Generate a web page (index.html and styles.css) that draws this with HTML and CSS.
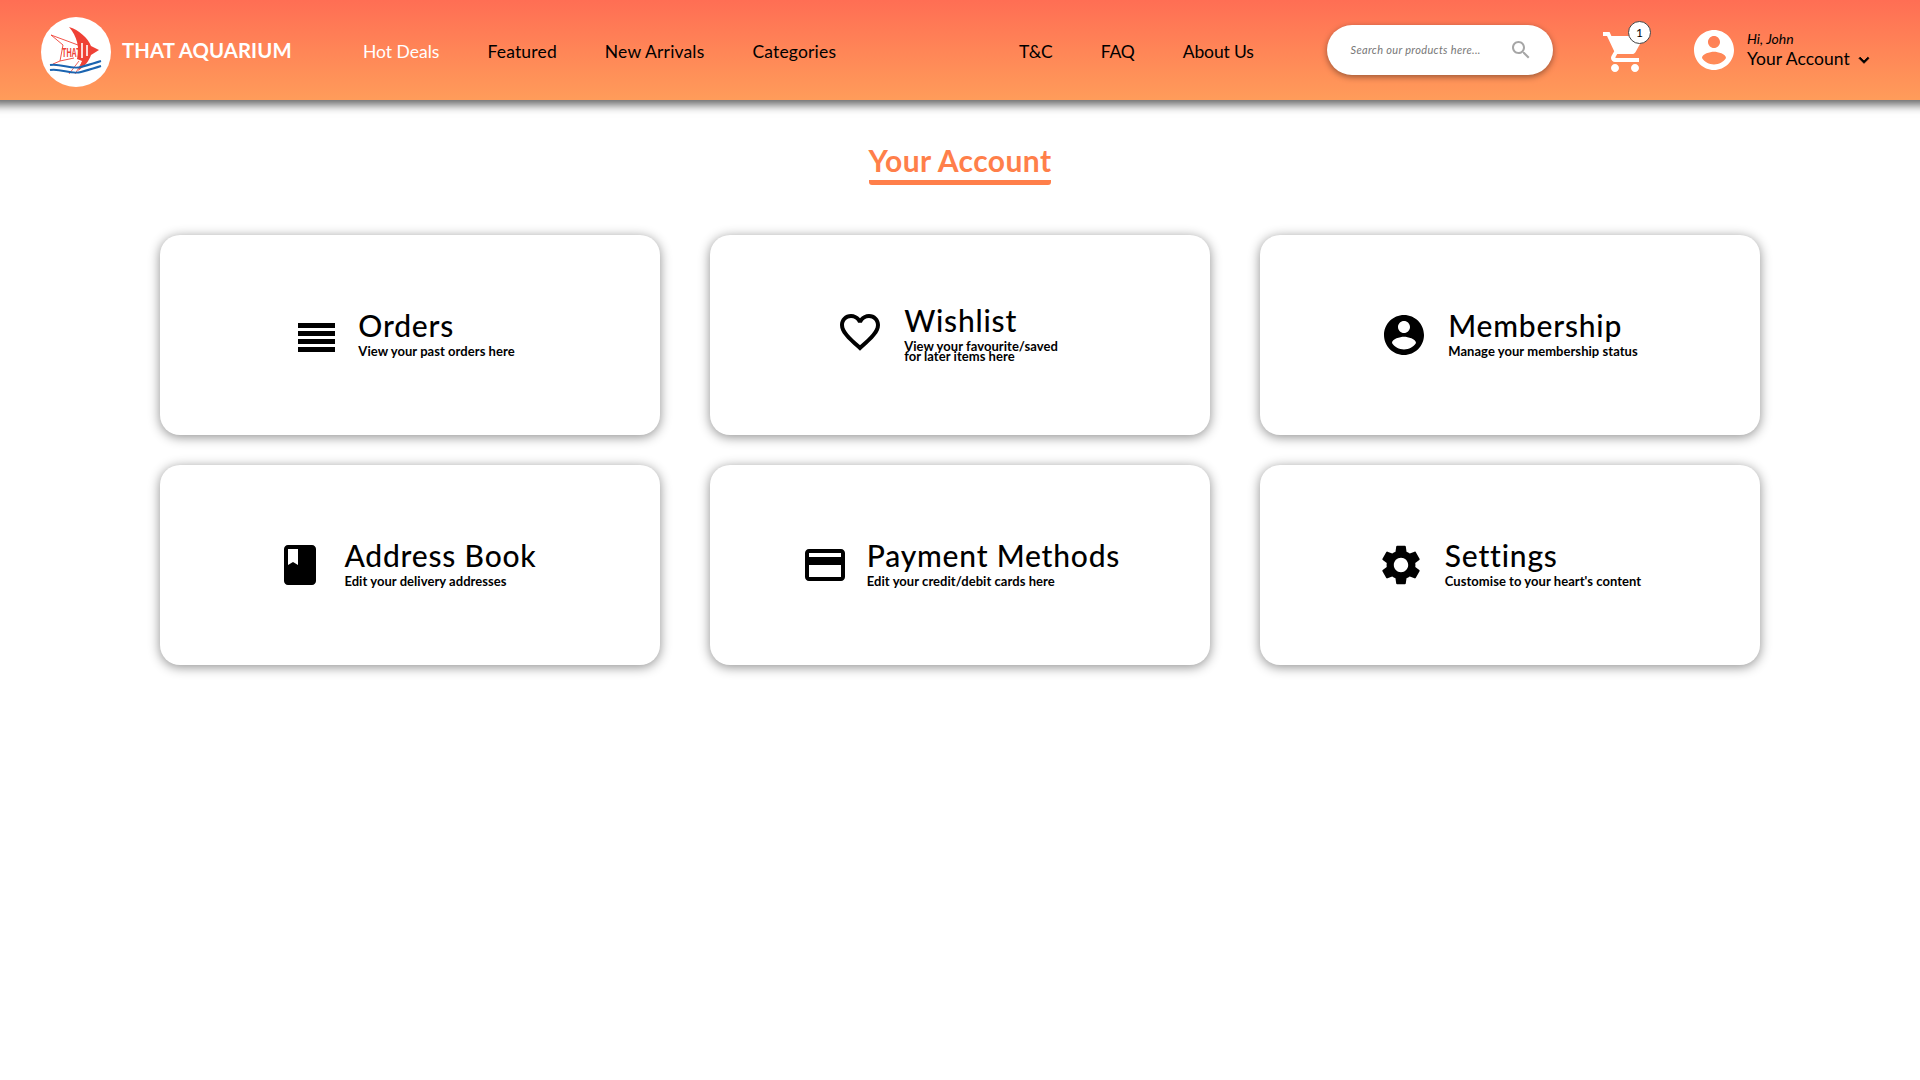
FILE: index.html
```html
<!DOCTYPE html>
<html lang="en">
<head>
<meta charset="utf-8">
<title>That Aquarium - Your Account</title>
<link rel="stylesheet" href="styles.css">
</head>
<body>
<header class="topbar">
  <a class="brand">
    <span class="brand-logo">
      <svg viewBox="0 0 70 70" width="70" height="70">
        <circle cx="35" cy="35" r="35" fill="#fff"/>
        <path d="M28 10 C38 13 47 21 50 29 L58 33 L50 38 C48 44 44 49 37 54 L41 44 L36 42 C39 31 36 19 28 10Z" fill="#ef4136"/>
        <path d="M41 26 L41 41 M46 28 L46 39" stroke="#fff" stroke-width="1.6" fill="none"/>
        <path d="M10 18 L37 28 M10 18 L22 28 L19 44 L33 41 M19 44 L12 47" fill="none" stroke="#ef4136" stroke-width=".9"/>
        <text class="logo-text" transform="translate(21 40) scale(.8 1.35)">THAT</text>
        <path d="M28 57 L38 44 M34 57 L42 44" stroke="#ef4136" stroke-width=".8" fill="none"/>
        <path d="M9 48 C20 46 30 53 40 50 C47 48 54 46 60 44 M9 53 C20 51 30 58 40 55 C47 53 54 51 60 49" fill="none" stroke="#1b64b0" stroke-width="1.9"/>
      </svg>
    </span>
    <span class="brand-name">THAT AQUARIUM</span>
  </a>
  <nav class="nav nav-main">
    <a class="nav-link is-active">Hot Deals</a>
    <a class="nav-link">Featured</a>
    <a class="nav-link">New Arrivals</a>
    <a class="nav-link">Categories</a>
  </nav>
  <nav class="nav nav-side">
    <a class="nav-link">T&amp;C</a>
    <a class="nav-link">FAQ</a>
    <a class="nav-link">About Us</a>
  </nav>
  <div class="search">
    <span class="search-text">Search our products here...</span>
    <svg class="search-icon" viewBox="0 0 24 24" width="24" height="24"><path d="M15.5 14h-.79l-.28-.27C15.41 12.59 16 11.11 16 9.5 16 5.91 13.09 3 9.5 3S3 5.91 3 9.5 5.91 16 9.5 16c1.61 0 3.09-.59 4.23-1.57l.27.28v.79l5 4.99L20.49 19l-4.99-5zm-6 0C7.01 14 5 11.99 5 9.5S7.01 5 9.5 5 14 7.01 14 9.5 11.99 14 9.5 14z"/></svg>
  </div>
  <div class="cart">
    <svg class="cart-icon" viewBox="0 0 24 24" width="48" height="48"><path d="M7 18c-1.1 0-1.99.9-1.99 2S5.9 22 7 22s2-.9 2-2-.9-2-2-2zM1 2v2h2l3.6 7.59-1.35 2.45c-.16.28-.25.61-.25.96 0 1.1.9 2 2 2h12v-2H7.42c-.14 0-.25-.11-.25-.25l.03-.12.9-1.63h7.45c.75 0 1.41-.41 1.75-1.03l3.58-6.47c.08-.14.12-.31.12-.48 0-.55-.45-1-1-1H5.21l-.94-2H1zm16 16c-1.1 0-1.99.9-1.99 2s.89 2 1.99 2 2-.9 2-2-.9-2-2-2z"/></svg>
    <span class="cart-badge">1</span>
  </div>
  <div class="account">
    <svg class="account-icon" viewBox="0 0 24 24" width="48" height="48"><path d="M12 2C6.48 2 2 6.48 2 12s4.48 10 10 10 10-4.48 10-10S17.52 2 12 2zm0 3c1.66 0 3 1.34 3 3s-1.34 3-3 3-3-1.34-3-3 1.34-3 3-3zm0 14.2c-2.5 0-4.71-1.28-6-3.22.03-1.99 4-3.08 6-3.08 1.99 0 5.97 1.09 6 3.08-1.29 1.94-3.5 3.22-6 3.22z"/></svg>
    <div class="account-text">
      <span class="account-hi">Hi, John</span>
      <span class="account-name">Your Account
        <svg class="chevron" viewBox="0 0 24 24" width="20" height="20"><path d="M16.59 8.59L12 13.17 7.41 8.59 6 10l6 6 6-6z" stroke="#000" stroke-width="1"/></svg>
      </span>
    </div>
  </div>
</header>

<main class="page">
  <div class="page-head"><h1 class="page-title">Your Account</h1></div>
  <section class="tiles">
    <a class="tile tile-left">
      <svg class="tile-icon icon-lines" viewBox="0 0 37 29" width="37" height="29"><path d="M0 0h37v5H0zM0 8h37v5H0zM0 16h37v5H0zM0 24h37v5H0z"/></svg>
      <div class="tile-text"><h2 class="tile-title">Orders</h2><p class="tile-sub">View your past orders here</p></div>
    </a>
    <a class="tile tile-up">
      <svg class="tile-icon" viewBox="0 0 24 24" width="48" height="48"><path d="M16.5 3c-1.74 0-3.41.81-4.5 2.09C10.91 3.81 9.24 3 7.5 3 4.42 3 2 5.42 2 8.5c0 3.78 3.4 6.86 8.55 11.54L12 21.35l1.45-1.32C18.6 15.36 22 12.28 22 8.5 22 5.42 19.58 3 16.5 3zm-4.4 15.55l-.1.1-.1-.1C7.14 14.24 4 11.39 4 8.5 4 6.5 5.5 5 7.5 5c1.54 0 3.04.99 3.57 2.36h1.87C13.46 5.99 14.96 5 16.5 5c2 0 3.5 1.5 3.5 3.5 0 2.89-3.14 5.74-7.9 10.05z"/></svg>
      <div class="tile-text tile-text-wide"><h2 class="tile-title">Wishlist</h2><p class="tile-sub tile-sub-wrap">View your favourite/saved<br>for later items here</p></div>
    </a>
    <a class="tile">
      <svg class="tile-icon" viewBox="0 0 24 24" width="48" height="48"><path d="M12 2C6.48 2 2 6.48 2 12s4.48 10 10 10 10-4.48 10-10S17.52 2 12 2zm0 3c1.66 0 3 1.34 3 3s-1.34 3-3 3-3-1.34-3-3 1.34-3 3-3zm0 14.2c-2.5 0-4.71-1.28-6-3.22.03-1.99 4-3.08 6-3.08 1.99 0 5.97 1.09 6 3.08-1.29 1.94-3.5 3.22-6 3.22z"/></svg>
      <div class="tile-text"><h2 class="tile-title">Membership</h2><p class="tile-sub">Manage your membership status</p></div>
    </a>
    <a class="tile tile-left">
      <svg class="tile-icon" viewBox="0 0 24 24" width="48" height="48"><path d="M18 2H6c-1.1 0-2 .9-2 2v16c0 1.1.9 2 2 2h12c1.1 0 2-.9 2-2V4c0-1.1-.9-2-2-2zM6 4h5v8l-2.5-1.5L6 12V4z"/></svg>
      <div class="tile-text"><h2 class="tile-title">Address Book</h2><p class="tile-sub">Edit your delivery addresses</p></div>
    </a>
    <a class="tile tile-tight">
      <svg class="tile-icon" viewBox="0 0 24 24" width="48" height="48"><path d="M20 4H4c-1.11 0-1.99.89-1.99 2L2 18c0 1.11.89 2 2 2h16c1.11 0 2-.89 2-2V6c0-1.11-.89-2-2-2zm0 14H4v-6h16v6zm0-10H4V6h16v2z"/></svg>
      <div class="tile-text"><h2 class="tile-title">Payment Methods</h2><p class="tile-sub">Edit your credit/debit cards here</p></div>
    </a>
    <a class="tile">
      <svg class="tile-icon" viewBox="0 0 24 24" width="48" height="48"><path d="M19.14 12.94c.04-.3.06-.61.06-.94 0-.32-.02-.64-.07-.94l2.03-1.58c.18-.14.23-.41.12-.61l-1.92-3.32c-.12-.22-.37-.29-.59-.22l-2.39.96c-.5-.38-1.03-.7-1.62-.94l-.36-2.54c-.04-.24-.24-.41-.48-.41h-3.84c-.24 0-.43.17-.47.41l-.36 2.54c-.59.24-1.13.57-1.62.94l-2.39-.96c-.22-.08-.47 0-.59.22L2.74 8.87c-.12.21-.08.47.12.61l2.03 1.58c-.05.3-.09.63-.09.94s.02.64.07.94l-2.03 1.58c-.18.14-.23.41-.12.61l1.92 3.32c.12.22.37.29.59.22l2.39-.96c.5.38 1.03.7 1.62.94l.36 2.54c.05.24.24.41.48.41h3.84c.24 0 .44-.17.47-.41l.36-2.54c.59-.24 1.13-.56 1.62-.94l2.39.96c.22.08.47 0 .59-.22l1.92-3.32c.12-.22.07-.47-.12-.61l-2.01-1.58zM12 15.6c-1.98 0-3.6-1.62-3.6-3.6s1.62-3.6 3.6-3.6 3.6 1.62 3.6 3.6-1.62 3.6-3.6 3.6z"/></svg>
      <div class="tile-text"><h2 class="tile-title">Settings</h2><p class="tile-sub">Customise to your heart's content</p></div>
    </a>
  </section>
</main>
</body>
</html>
```
FILE: styles.css
```css
* { box-sizing: border-box; }
html, body { margin: 0; padding: 0; }
body {
  min-height: 1080px;
  background: #fff;
  color: #000;
  font-family: Lato, "Open Sans", sans-serif;
}

.topbar {
  height: 100px;
  display: flex;
  align-items: center;
  padding-left: 41px;
  background: linear-gradient(180deg, #ff6e54 0%, #ff9c5a 100%);
  box-shadow: 0 -5px 9px 10px rgba(0, 0, 0, .6);
  position: relative;
}
.brand { display: flex; align-items: center; gap: 11px; width: 322px; margin-top: 2px; }
.brand-logo { display: block; width: 70px; height: 70px; margin-top: 2px; }
.brand-logo svg { display: block; }
.logo-text { font: 700 9px "Liberation Sans", sans-serif; fill: #ef4136; }
.brand-name { color: #fff; font-size: 20.3px; font-weight: 700; letter-spacing: .1px; margin-top: -2px; }

.nav { display: flex; gap: 48px; margin-top: 2px; }
.nav-main { width: 656px; }
.nav-side { width: 307.5px; }
.nav-link { font-size: 17.5px; color: #000; white-space: nowrap; }
.nav-main .nav-link { letter-spacing: .17px; }
.nav-side .nav-link { letter-spacing: -.12px; }
.nav-link.is-active { color: #fff; letter-spacing: 0; }

.search {
  width: 226.5px;
  height: 50px;
  border-radius: 25px;
  background: #fff;
  box-shadow: 0 2px 6px rgba(0, 0, 0, .4);
  display: flex;
  align-items: center;
  justify-content: space-between;
  padding: 0 20px 0 24px;
}
.search-text { font-size: 11px; font-style: italic; color: #777; white-space: nowrap; letter-spacing: .33px; margin-bottom: 2px; }
.search-icon { fill: #a6a6a6; }

.cart { position: relative; width: 48px; height: 48px; margin-left: 48px; margin-top: 4px; }
.cart-icon { display: block; fill: #fff; }
.cart-badge {
  position: absolute;
  top: -7px;
  right: -2px;
  width: 23px;
  height: 23px;
  border-radius: 50%;
  border: 1px solid #444;
  background: #fff;
  font-size: 12px;
  line-height: 21px;
  text-align: center;
}

.account { display: flex; align-items: center; margin-left: 41px; }
.account-icon { display: block; fill: #fff; }
.account-text { display: flex; flex-direction: column; margin-left: 9px; margin-top: 1px; }
.account-hi { font-size: 14px; font-style: italic; line-height: 16px; }
.account-name { display: flex; align-items: center; gap: 4px; font-size: 17.5px; line-height: 21px; white-space: nowrap; letter-spacing: .05px; }
.chevron { margin-top: 3px; }

.page { padding: 0 160px; }
.page-head { display: flex; justify-content: center; padding-top: 42px; }
.page-title {
  margin: 0;
  padding-bottom: 2px;
  font-size: 30px;
  font-weight: 700;
  line-height: 36px;
  color: #ff7f4a;
  border-bottom: 5px solid #ff7f4a;
  letter-spacing: .42px;
  border-radius: 0 0 3px 3px;
}

.tiles {
  display: grid;
  grid-template-columns: repeat(3, 500px);
  grid-auto-rows: 200px;
  column-gap: 50px;
  row-gap: 30px;
  margin-top: 50px;
}
.tile {
  display: flex;
  align-items: center;
  justify-content: center;
  gap: 20px;
  padding-right: 2px;
  background: #fff;
  border-radius: 20px;
  box-shadow: 0 2px 12px rgba(0, 0, 0, .45);
}
.tile-left { padding-right: 7px; }
.tile-tight { gap: 18px; padding-right: 0; padding-left: 1px; }
.tile-icon { flex: none; fill: #000; }
.icon-lines { margin-top: 4px; margin-right: 3px; }
.tile-text { display: flex; flex-direction: column; margin-bottom: 4px; }
.tile-title { margin: 0; font-size: 30px; font-weight: 500; line-height: 36px; letter-spacing: .8px; }
.tile-sub { margin: 0; font-size: 13px; font-weight: 700; line-height: 16px; letter-spacing: .05px; }
.tile-sub-wrap { line-height: 10px; margin-top: 3px; }
.tile-up { padding-bottom: 6px; }
.tile-text-wide { padding-right: 24px; margin-bottom: 2px; }
```
